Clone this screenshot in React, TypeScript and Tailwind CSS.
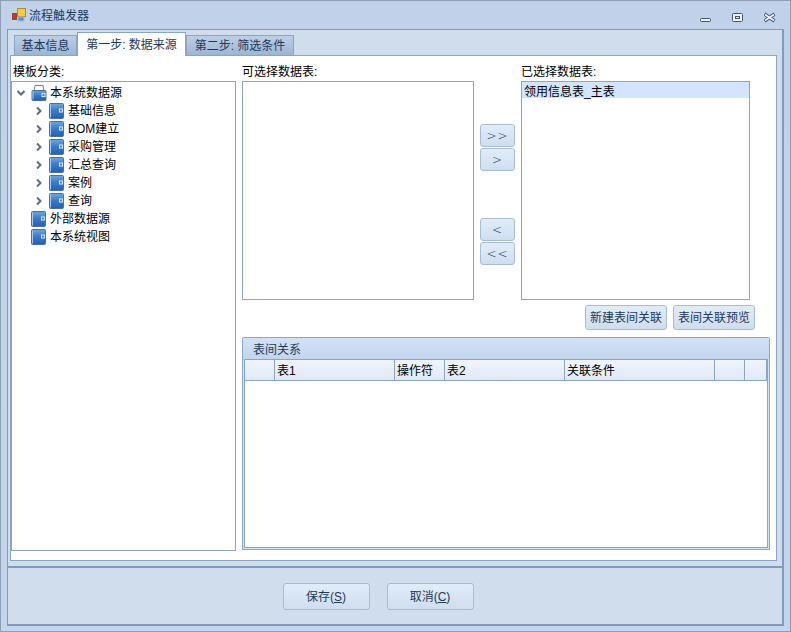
import React from "react";

const font = { fontFamily: '"Liberation Sans", "Noto Sans CJK SC", sans-serif' };

const btnClass =
  "flex items-center justify-center rounded-[3px] border border-[#a9bcd6] bg-gradient-to-b from-[#e1ecf9] to-[#cfdeef] text-[12px] text-[#1e395b]";

const arrowClass = "font-['DejaVu_Sans'] font-extralight tracking-[1px] text-[#1e3f78]";

const FolderBody: React.FC<{ id: string; y: number }> = ({ id, y }) => (
  <>
    <defs>
      <linearGradient id={id} x1="0" y1="0" x2="0" y2="1">
        <stop offset="0" stopColor="#6ea6e2" />
        <stop offset="0.45" stopColor="#3a7ccb" />
        <stop offset="1" stopColor="#2260b4" />
      </linearGradient>
    </defs>
    <rect x="0.5" y={y + 0.5} width="14" height={15 - y} rx="1" fill={`url(#${id})`} stroke="#4a7099" />
    <path d={`M1.5 ${y + 1.5} V${14.5}`} stroke="#a9cdf0" />
    <rect x="10" y={y + (15 - y) / 2 - 2} width="4" height="4" fill="#dfeaf7" />
    <rect x="11" y={y + (15 - y) / 2 - 1} width="2" height="2" fill="#3a7ccb" />
  </>
);

const FolderIcon: React.FC<{ id: string }> = ({ id }) => (
  <svg width="15" height="16" viewBox="0 0 15 16" className="shrink-0">
    <FolderBody id={id} y={0} />
  </svg>
);

const RootIcon: React.FC = () => (
  <svg width="16" height="16" viewBox="0 0 15 16" className="shrink-0">
    <path d="M2.5 6 L3.5 0.5 H11.5 L12.5 6 Z" fill="#ffffff" stroke="#5b86b5" />
    <FolderBody id="root-body" y={5} />
  </svg>
);

const Chevron: React.FC<{ open?: boolean }> = ({ open }) => (
  <svg width="8" height="8" viewBox="0 0 8 8" className="shrink-0">
    {open ? (
      <path d="M0.5 2 L4 5.5 L7.5 2" fill="none" stroke="#5f6b85" strokeWidth="2" />
    ) : (
      <path d="M2 0.5 L5.5 4 L2 7.5" fill="none" stroke="#5f6b85" strokeWidth="2" />
    )}
  </svg>
);

const AppIcon: React.FC = () => (
  <svg width="16" height="16" viewBox="0 0 16 16" className="shrink-0">
    <rect x="0.5" y="0.5" width="14" height="15" fill="#c9d3df" />
    <rect x="6.5" y="1.5" width="8" height="8" fill="#f7cc3a" stroke="#b08a2c" />
    <rect x="1.5" y="6.5" width="4" height="6" fill="#d6302c" stroke="#8a4a3c" />
    <rect x="7" y="10" width="6" height="4" fill="#5f8fdc" stroke="#a9bcd6" />
  </svg>
);

const TreeRow: React.FC<{ label: string; id: string }> = ({ label, id }) => (
  <div className="flex h-[18px] items-center pl-[23px]">
    <span className="flex w-[14px] shrink-0">
      <Chevron />
    </span>
    <FolderIcon id={id} />
    <span className="ml-[4px] text-[12px] text-black">{label}</span>
  </div>
);

const HeaderCell: React.FC<{ w: string; label?: string }> = ({ w, label }) => (
  <div className={`${w} flex h-full shrink-0 items-center border-r border-[#8ba5c6] pl-[2px] pt-px text-[12px] text-black`}>
    {label}
  </div>
);

export default function App() {
  const children = ["基础信息", "BOM建立", "采购管理", "汇总查询", "案例", "查询"];

  return (
    <div
      style={font}
      className="flex h-[632px] w-[791px] flex-col overflow-hidden border border-[#8f9fb3] bg-gradient-to-b from-[#bfd2e9] to-[#c5d6ec]"
    >
      {/* title bar */}
      <div className="flex h-[28px] shrink-0 items-center pl-[10px] pr-[14px]">
        <AppIcon />
        <span className="ml-[2px] pt-px text-[12px] text-[#1e395b]">流程触发器</span>
        <div className="ml-auto flex items-center gap-[20px] pt-[3px]">
          <svg width="12" height="12" viewBox="0 0 12 12">
            <rect x="0.5" y="7.5" width="10" height="3" rx="1" fill="#eef3fa" stroke="#44546f" />
          </svg>
          <svg width="12" height="12" viewBox="0 0 12 12">
            <rect x="0.5" y="2.5" width="10" height="8" rx="1" fill="#eef3fa" stroke="#44546f" />
            <rect x="3.5" y="5.5" width="4" height="2" fill="none" stroke="#44546f" />
          </svg>
          <svg width="12" height="12" viewBox="0 0 12 12">
            <path d="M0.5 3 L10.5 10 M10.5 3 L0.5 10" stroke="#44546f" strokeWidth="3.4" />
            <path d="M1 3.5 L10 9.5 M10 3.5 L1 9.5" stroke="#f2f6fb" strokeWidth="1.6" />
          </svg>
        </div>
      </div>

      {/* client area */}
      <div className="mx-[6px] mb-[5px] flex min-h-0 flex-1 flex-col border-b-2 border-l border-r-2 border-t border-[#7f9bbd] bg-[#d0dded]">
        <div className="flex h-[536px] shrink-0 flex-col pl-[2px] pr-[6px] pt-[3px]">
          {/* tabs */}
          <div className="flex h-[22px] shrink-0 items-end pl-[4px]">
            <div className="flex h-[20px] w-[63px] items-center justify-center border border-b-0 border-[#8ba5c6] bg-gradient-to-b from-[#bccfe6] to-[#9db5d3] pt-px text-[12px] text-[#1e395b]">
              基本信息
            </div>
            <div className="relative z-10 -mb-px flex h-[24px] w-[109px] items-center justify-center border border-b-0 border-[#8ba5c6] bg-white pt-px text-[12px] text-[#1e395b]">
              第一步: 数据来源
            </div>
            <div className="flex h-[20px] w-[108px] items-center justify-center border border-b-0 border-[#8ba5c6] bg-gradient-to-b from-[#bccfe6] to-[#9db5d3] pt-px text-[12px] text-[#1e395b]">
              第二步: 筛选条件
            </div>
          </div>

          {/* tab page */}
          <div className="flex h-[506px] w-[767px] shrink-0 border border-[#8ba5c6] bg-white">
            <div className="flex w-[225px] shrink-0 flex-col">
              <div className="flex h-[25px] items-center pl-[2px] pt-[6px] text-[12px] text-black">模板分类:</div>
              <div className="h-[470px] border border-[#8ba5c6] bg-white pt-[2px]">
                <div className="flex h-[18px] items-center pl-[5px]">
                  <span className="flex w-[14px] shrink-0">
                    <Chevron open />
                  </span>
                  <RootIcon />
                  <span className="ml-[3px] text-[12px] text-black">本系统数据源</span>
                </div>
                {children.map((c, i) => (
                  <TreeRow key={c} label={c} id={`child-${i}`} />
                ))}
                <div className="flex h-[18px] items-center pl-[19px]">
                  <FolderIcon id="external" />
                  <span className="ml-[4px] text-[12px] text-black">外部数据源</span>
                </div>
                <div className="flex h-[18px] items-center pl-[19px]">
                  <FolderIcon id="views" />
                  <span className="ml-[4px] text-[12px] text-black">本系统视图</span>
                </div>
              </div>
            </div>

            <div className="ml-[6px] flex w-[528px] shrink-0 flex-col">
              <div className="flex h-[244px] shrink-0">
                <div className="flex w-[232px] shrink-0 flex-col">
                  <div className="flex h-[25px] items-center pt-[6px] text-[12px] text-black">可选择数据表:</div>
                  <div className="h-[219px] border border-[#8ba5c6] bg-white" />
                </div>
                <div className="flex w-[47px] shrink-0 flex-col items-center pt-[68px]">
                  <button className={`${btnClass} ${arrowClass} h-[23px] w-[35px]`}>&gt;&gt;</button>
                  <button className={`${btnClass} ${arrowClass} mt-px h-[23px] w-[35px]`}>&gt;</button>
                  <button className={`${btnClass} ${arrowClass} mt-[47px] h-[23px] w-[35px]`}>&lt;</button>
                  <button className={`${btnClass} ${arrowClass} mt-px h-[23px] w-[35px]`}>&lt;&lt;</button>
                </div>
                <div className="flex w-[229px] shrink-0 flex-col">
                  <div className="flex h-[25px] items-center pt-[6px] text-[12px] text-black">已选择数据表:</div>
                  <div className="h-[219px] border border-[#8ba5c6] bg-white">
                    <div className="flex h-[16px] items-center bg-[#d3e5fc] pl-[2px] pt-[3px] text-[12px] text-black">
                      领用信息表_主表
                    </div>
                  </div>
                </div>
              </div>

              <div className="mt-[5px] flex justify-end gap-[6px] pr-[15px]">
                <button className={`${btnClass} h-[25px] w-[82px]`}>新建表间关联</button>
                <button className={`${btnClass} h-[25px] w-[82px]`}>表间关联预览</button>
              </div>

              <div className="mt-[7px] flex h-[213px] flex-col rounded-t-[2px] border border-[#8ba5c6] bg-[#d6e3f3]">
                <div className="flex h-[21px] shrink-0 items-center bg-gradient-to-b from-[#d3e2f5] to-[#c2d5ed] pl-[10px] pt-[3px] text-[12px] text-[#1e395b]">
                  表间关系
                </div>
                <div className="mx-[1px] mb-[1px] flex min-h-0 flex-1 flex-col border border-[#8ba5c6] bg-white">
                  <div className="flex h-[21px] shrink-0 border-b border-[#8ba5c6] bg-gradient-to-b from-[#f0f5fc] to-[#dfe9f6]">
                    <HeaderCell w="w-[30px]" />
                    <HeaderCell w="w-[120px]" label="表1" />
                    <HeaderCell w="w-[50px]" label="操作符" />
                    <HeaderCell w="w-[120px]" label="表2" />
                    <HeaderCell w="w-[150px]" label="关联条件" />
                    <HeaderCell w="w-[30px]" />
                    <HeaderCell w="w-[22px]" />
                  </div>
                </div>
              </div>
            </div>
          </div>
        </div>

        {/* footer */}
        <div className="flex min-h-0 flex-1 justify-center gap-[17px] border-t-2 border-[#7f9bbd] pr-[34px] pt-[15px]">
          <button className={`${btnClass} h-[27px] w-[87px]`}>
            保存(<span className="underline">S</span>)
          </button>
          <button className={`${btnClass} h-[27px] w-[87px]`}>
            取消(<span className="underline">C</span>)
          </button>
        </div>
      </div>
    </div>
  );
}
